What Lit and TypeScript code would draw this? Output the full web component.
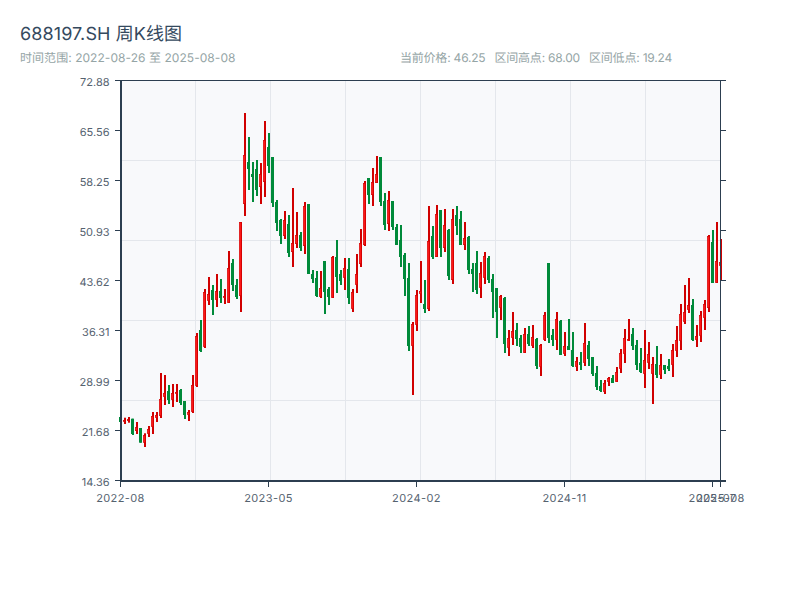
import { LitElement, html, css, svg } from "lit";
import { customElement } from "lit/decorators.js";

// hi, lo, body top, body bottom (pixel rows of the reference scale), 1 = red, 0 = green
const C: number[][] = [
[417,422,417,422,0],[417.7,424,420,422,1],[417,422.7,419.3,421,1],[418.7,435,418.7,434,0],[422,434,427.3,431,1],
[428,442.7,428,442.7,0],[433.3,447,435.3,442.7,1],[426,437,429,434,1],[412,434,416,427,1],[412,422,415,418,1],
[373,418,399.3,416,1],[375,405,393,397,1],[385,404,391,400,0],[384,407,393,400,1],[384,402,392,394,1],
[389,405,390,403,0],[401,419,401,415,0],[410,421,412,415,1],[375,413,385,412,1],[333,387,336,386,1],
[320,352,330,351,0],[289,348,292,347,1],[277,305,294,301,1],[285,315,290,300,0],[274,307,291,300,1],
[279,303,291,298,0],[289,304,296,298,1],[251,303,268,303,1],[259,291,263,285,0],[279,299,285,297,0],
[222,312,222,296,1],[113,216,155,204,1],[137,190,162,169,0],[162,202,174,177,0],[160,196,169,190,0],
[163,204,174,187,1],[121,197,140,182,1],[133,173,147,166,0],[157,207,157,203,0],[200,231,202,223,0],
[219,244,220,236,0],[211,239,220,236,1],[215,257,224,253,0],[188,267,243,252,1],[212,248,235,244,1],
[232,251,235,248,0],[202,254,206,246,1],[204,274,204,274,0],[270,283,274,279,0],[271,297,278,296,0],
[271,298,288,297,1],[261,314,261,292,0],[287,305,289,297,0],[256,298,257,298,1],[240,293,257,277,0],
[270,285,274,281,0],[258,290,268,278,1],[258,304,269,298,0],[289,312,292,309,1],[254,293,274,285,1],
[229,267,243,264,1],[181,246,183,245,1],[178,204,178,195,0],[168,206,182,195,1],[156,183,174,183,1],
[157,206,157,202,0],[193,230,201,225,0],[191,231,200,224,1],[201,230,201,227,0],[224,245,227,245,0],
[225,267,240,257,0],[253,296,255,279,0],[263,351,278,346,0],[322,395,324,346,1],[290,331,295,325,1],
[261,303,291,294,1],[280,313,304,309,0],[206,311,241,309,1],[226,259,236,257,0],[205,257,214,257,1],
[210,257,210,248,0],[209,252,225,248,1],[229,280,230,276,0],[209,284,219,280,1],[206,235,215,226,0],
[211,245,219,245,0],[222,250,238,245,1],[236,274,237,270,0],[263,292,269,274,0],[251,294,263,290,0],
[262,298,273,288,1],[252,284,256,278,1],[256,283,258,280,0],[274,318,279,292,0],[288,338,288,312,0],
[295,320,296,308,1],[297,353,298,344,0],[330,356,338,348,1],[312,345,331,338,1],[323,346,330,339,0],
[335,353,338,347,0],[328,353,334,353,1],[326,346,334,344,0],[325,348,337,346,1],[338,369,339,366,0],
[344,376,345,367,1],[312,341,315,340,1],[263,343,263,338,0],[329,346,335,340,0],[312,350,319,340,1],
[320,355,321,355,0],[332,356,346,354,1],[319,350,346,350,0],[332,367,350,366,0],[357,371,361,367,1],
[352,370,362,365,0],[323,366,343,363,1],[341,366,345,359,0],[357,376,357,374,0],[366,390,373,387,0],
[380,392,386,391,0],[380,394,383,392,1],[377,386,378,382,1],[375,383,378,383,0],[367,382,372,382,1],
[349,373,353,369,1],[329,363,338,354,1],[319,341,339,341,1],[328,350,334,346,0],[340,370,345,365,0],
[348,373,363,372,0],[330,388,360,374,1],[342,369,354,363,1],[357,404,364,374,1],[346,378,364,375,0],
[354,379,365,375,1],[365,374,365,370,0],[359,371,366,369,0],[344,377,350,365,1],[326,357,340,351,1],
[304,350,314,341,1],[285,324,312,322,1],[278,313,305,310,1],[299,341,305,340,0],[325,347,336,340,1],
[311,342,315,336,1],[300,330,304,318,1],[235,312,236,308,1],[230,283,242,283,0],[222,283,261,283,1],
[239,280,262,266,1],
];

const YL = ["72.88","65.56","58.25","50.93","43.62","36.31","28.99","21.68","14.36"];
const XL: [number, string][] = [[0,"2022-08"],[37,"2023-05"],[74,"2024-02"],[111,"2024-11"],[148,"2025-07"],[150,"2025-08"]];
const tx = (i: number) => 120.5 + 4 * i;

@customElement("app-root")
export class AppRoot extends LitElement {
  static styles = css`
    :host { display: block; width: 800px; height: 600px; background: #fff; overflow: hidden;
      font-family: Inter, "Noto Sans CJK SC", sans-serif; text-rendering: geometricPrecision; }
    .head { padding: 23px 128px 4px 20px; height: 43px; }
    h1 { margin: 0; font-size: 18px; line-height: 24px; font-weight: 400; color: #34495e; letter-spacing: 0.1px; }
    .sub { display: flex; justify-content: space-between; margin-top: 3px; font-size: 12px; line-height: 16px; color: #95a5a6; }
    .range { letter-spacing: 0.05px; }
    .stats { display: flex; gap: 9px; letter-spacing: -0.2px; }
    svg { display: block; }
    .bg { fill: #f8f9fb; }
    .grid { stroke: #e4e7ec; stroke-width: 1; }
    .axis { stroke: #2c3e50; fill: none; }
    .thick { stroke-width: 2; }
    .thin { stroke-width: 1; }
    text { font-size: 11px; fill: #55626f; }
    .xl { letter-spacing: 0.4px; }
    .wr { fill: #d00000; }
    .wg { fill: #008a3a; }
    .br { fill: #ff1a1a; stroke: #d00000; stroke-width: 0.6; }
    .bg2 { fill: #008a3a; }
  `;

  private candle(c: number[], i: number) {
    const x = 120 + 4 * i;
    const [hi, lo, bt, bb, up] = c;
    return up
      ? svg`<rect class="wr" x=${x} y=${hi} width="2" height=${lo - hi}></rect>
            <rect class="br" x=${x - 0.7} y=${bt + 0.3} width="1.9" height=${Math.max(bb - bt - 0.6, 0.5)}></rect>`
      : svg`<rect class="wg" x=${x} y=${hi} width="2" height=${lo - hi}></rect>
            <rect class="bg2" x=${x - 1} y=${bt} width="2.4" height=${Math.max(bb - bt, 1)}></rect>`;
  }

  render() {
    const vg = [195.5, 270.5, 345.5, 420.5, 495.5, 570.5, 645.5];
    const hg = [160.5, 240.5, 320.5, 400.5];
    const yt = YL.map((_, i) => 80.5 + 50 * i);
    return html`
      <div class="head">
        <h1>688197.SH 周K线图</h1>
        <div class="sub">
          <span class="range">时间范围: 2022-08-26 至 2025-08-08</span>
          <div class="stats"><span>当前价格: 46.25</span><span>区间高点: 68.00</span><span>区间低点: 19.24</span></div>
        </div>
      </div>
      <svg width="800" height="530" viewBox="0 70 800 530">
        <rect class="bg" x="121" y="81" width="599" height="400"></rect>
        ${vg.map(x => svg`<line class="grid" x1=${x} x2=${x} y1="81" y2="480"></line>`)}
        ${hg.map(y => svg`<line class="grid" x1="121" x2="720" y1=${y} y2=${y}></line>`)}
        ${C.map((c, i) => this.candle(c, i))}
        <line class="axis thin" x1="120" x2="721" y1="80.5" y2="80.5"></line>
        <line class="axis thin" x1="720.5" x2="720.5" y1="80" y2="481"></line>
        <line class="axis thick" x1="121" x2="121" y1="80" y2="482"></line>
        <line class="axis thick" x1="120" x2="726" y1="481" y2="481"></line>
        ${yt.map(y => svg`<line class="axis thin" x1="115" x2="120" y1=${y} y2=${y}></line>
                          <line class="axis thin" x1="721" x2="726" y1=${y} y2=${y}></line>`)}
        ${XL.map(([i]) => svg`<line class="axis thin" x1=${tx(i)} x2=${tx(i)} y1="482" y2="487"></line>`)}
        ${YL.map((t, i) => svg`<text x="109.5" y=${yt[i] + 5.5} text-anchor="end">${t}</text>`)}
        ${XL.map(([i, t]) => svg`<text class="xl" x=${tx(i)} y="501.5" text-anchor="middle">${t}</text>`)}
      </svg>
    `;
  }
}
